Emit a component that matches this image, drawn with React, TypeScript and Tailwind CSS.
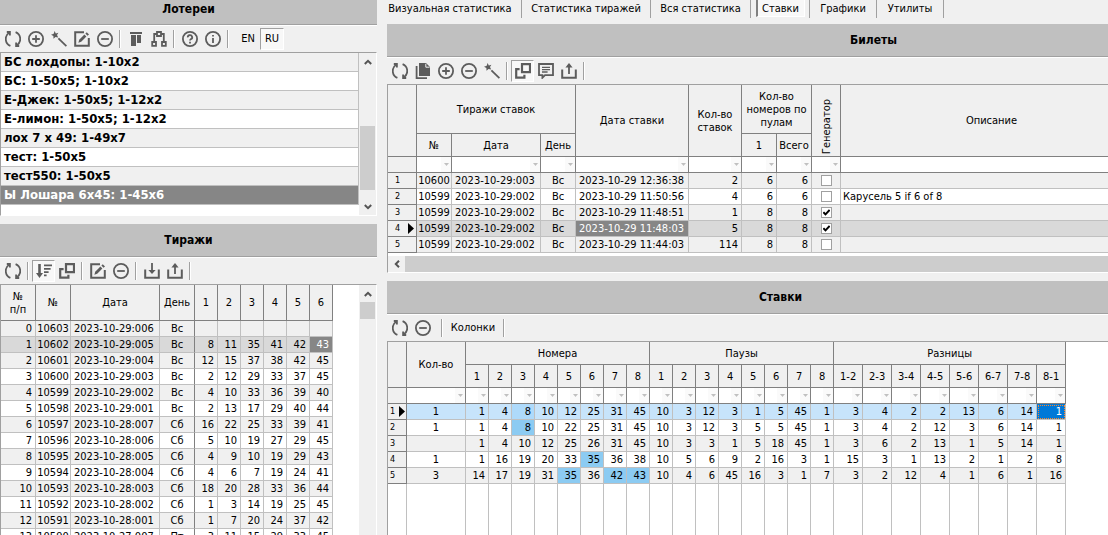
import type { ReactNode } from 'react';
import clsx from 'clsx';

type IconName =
  | 'refresh' | 'plus' | 'minus' | 'wand' | 'edit' | 'bars' | 'tree' | 'help' | 'info'
  | 'sort' | 'windows' | 'import' | 'export' | 'copy' | 'comment';

const icons: Record<IconName, ReactNode> = {
  refresh: (
    <>
      <path d="M5.4 14.9A7.4 7.4 0 0 1 4.2 1.8" />
      <path d="M1.8 1H4.9V4.6" />
      <path d="M10.6 1.1A7.4 7.4 0 0 1 11.8 14.2" />
      <path d="M14.2 15H11.1V11.4" />
    </>
  ),
  plus: (
    <>
      <circle cx="8" cy="8" r="7.1" />
      <path d="M8 4.2V11.8M4.2 8H11.8" />
    </>
  ),
  minus: (
    <>
      <circle cx="8" cy="8" r="7.1" />
      <path d="M4.2 8H11.8" />
    </>
  ),
  wand: (
    <>
      <path d="M3.6 0L4.8 2.4L7.4 1.8L6 4.1L7.2 6.6L4.5 5.9L2.5 7.7L2.4 5L0 3.7L2.7 2.7Z" fill="currentColor" stroke="none" />
      <path d="M7.4 7.4L15.4 15.2" />
    </>
  ),
  edit: (
    <>
      <path d="M10 1.2H1.2V14.8H14.8V7" strokeWidth="2" />
      <path d="M4.4 11.7L5.2 8.8L10.4 3.6L12.4 5.6L7.2 10.8Z" fill="currentColor" stroke="none" />
      <path d="M11.4 2.6L12.8 1.2L15 3.4L13.5 4.8Z" fill="currentColor" stroke="none" />
    </>
  ),
  bars: (
    <g fill="currentColor" stroke="none">
      <path d="M2 1H14V3H2Z" />
      <path d="M3 4H8V15H3Z" />
      <path d="M9 4H13V12H9Z" />
    </g>
  ),
  tree: (
    <>
      <path d="M6 1H10V5H6Z" />
      <path d="M1.2 11H5V14.8H1.2Z" />
      <path d="M11 11H14.8V14.8H11Z" />
      <path d="M6 3H3.2V11M10 3H12.8V11" />
    </>
  ),
  help: (
    <>
      <circle cx="8" cy="8" r="7.1" />
      <path d="M5.8 6.4A2.2 2.1 0 1 1 8.8 8.2Q8 8.6 8 9.6" />
      <path d="M8 10.8V12.4" />
    </>
  ),
  info: (
    <>
      <circle cx="8" cy="8" r="7.1" />
      <path d="M8 7V12M8 4V5.6" />
    </>
  ),
  sort: (
    <>
      <path d="M3.5 1V11" strokeWidth="2.6" />
      <path d="M0 10H7L3.5 15Z" fill="currentColor" stroke="none" />
      <path d="M8 2.4H16M8 5.8H14.6M8 9.2H12.6M8 12.4H10.6" />
    </>
  ),
  windows: (
    <>
      <path d="M7 1.2H15V9.2H7Z" strokeWidth="2.2" />
      <path d="M4.6 6.2H1.2V14.6H9.4V11.8" strokeWidth="2.2" />
    </>
  ),
  import: (
    <>
      <path d="M1.2 6.6V14.8H14.8V6.6" strokeWidth="2" />
      <path d="M8 0V8" />
      <path d="M4.4 7H11.6L8 11Z" fill="currentColor" stroke="none" />
    </>
  ),
  export: (
    <>
      <path d="M1.2 6.6V14.8H14.8V6.6" strokeWidth="2" />
      <path d="M8 3V11" />
      <path d="M4.4 4.4H11.6L8 0Z" fill="currentColor" stroke="none" />
    </>
  ),
  copy: (
    <>
      <path d="M4 0H11L15 4V13H4Z" fill="currentColor" stroke="none" />
      <path d="M1.6 3V15.2H12" />
      <path d="M10.8 0.8V4.2H14.6" stroke="#f0f0f0" strokeWidth="1" />
    </>
  ),
  comment: (
    <>
      <path d="M1 1H15V12.2H7L4.4 14.8V12.2H1Z" />
      <path d="M4 4.4H12M4 6.7H12M4 9H9.6" strokeWidth="1.3" />
    </>
  ),
};

function Icon({ name }: { name: IconName }) {
  return (
    <svg className="h-4 w-4" viewBox="0 0 16 16" fill="none" stroke="currentColor" strokeWidth="1.8">
      {icons[name]}
    </svg>
  );
}

function ToolButton({ icon, label, pressed }: { icon?: IconName; label?: string; pressed?: boolean }) {
  return (
    <button
      type="button"
      aria-label={label ?? icon}
      aria-pressed={pressed}
      className={clsx(
        'flex h-[22px] shrink-0 items-center justify-center border',
        label ? 'min-w-6 text-[11px] text-black' : 'w-[23px] text-[#5c5c5c]',
        pressed ? 'border-t-[#a0a0a0] border-r-white border-b-white border-l-[#a0a0a0] bg-[#f8f8f8]' : 'border-transparent',
      )}
    >
      {icon ? <Icon name={icon} /> : label}
    </button>
  );
}

function Separator() {
  return <span className="mx-[3px] h-[18px] w-0.5 shrink-0 border-r border-l border-r-white border-l-[#a0a0a0]" />;
}

function Toolbar({ children }: { children: ReactNode }) {
  return <div className="flex h-[26px] shrink-0 items-center pl-px">{children}</div>;
}

function Title({ children, className }: { children: ReactNode; className?: string }) {
  return (
    <h2
      className={clsx(
        'flex shrink-0 items-center justify-center border-b border-[#a0a0a0] bg-[#c0c0c0] text-[12px] font-bold shadow-[0_1px_0_white]',
        className,
      )}
    >
      {children}
    </h2>
  );
}

function Chevron({ className }: { className?: string }) {
  return (
    <svg className={clsx('h-2 w-2', className)} viewBox="0 0 8 8" fill="none" stroke="#555" strokeWidth="2">
      <path d="M0.8 6L4 2.8L7.2 6" />
    </svg>
  );
}

function ScrollArrow({ label, className }: { label: string; className?: string }) {
  return (
    <button type="button" aria-label={label} className="flex h-[17px] w-full shrink-0 items-center justify-center">
      <Chevron className={className} />
    </button>
  );
}

function FilterCell({ caret = true }: { caret?: boolean }) {
  return (
    <td className="h-4 border-r border-b border-[#808080] bg-white p-0">
      {caret && (
        <button type="button" aria-label="Фильтр" className="ml-auto flex h-[15px] w-[10px] items-center justify-center bg-[#fafafa]">
          <svg className="h-[3px] w-[5px]" viewBox="0 0 5 3" fill="#c0c0c0">
            <path d="M0 0H5L2.5 3Z" />
          </svg>
        </button>
      )}
    </td>
  );
}

function RowNumber({ n, current, narrow }: { n: number; current?: boolean; narrow?: boolean }) {
  return (
    <th scope="row" className="h-4 border-r border-b border-[#808080] bg-[#f0f0f0] p-0 font-normal">
      <div className={clsx('flex items-center justify-between text-[9px] leading-[15px]', narrow ? 'pr-px pl-0.5' : 'pr-0.5 pl-[7px]')}>
        {n}
        {current && (
          <svg className="h-[11px] w-[6px]" viewBox="0 0 6 11" fill="black">
            <path d="M0 0L6 5.5L0 11Z" />
          </svg>
        )}
      </div>
    </th>
  );
}

const head = 'border-r border-b border-[#808080] bg-[#f0f0f0] p-0 text-center font-normal leading-[13px]';
const cell = 'h-4 border-r border-b border-[#c0c0c0] p-0 leading-[15px] whitespace-nowrap';
const tableBase = 'table-fixed border-separate border-spacing-0 text-[11px]';

const lotteries = [
  'БС лохдопы: 1-10x2',
  'БС: 1-50x5; 1-10x2',
  'Е-Джек: 1-50x5; 1-12x2',
  'Е-лимон: 1-50x5; 1-12x2',
  'лох 7 x 49: 1-49x7',
  'тест: 1-50x5',
  'тест550: 1-50x5',
  'Ы Лошара 6x45: 1-45x6',
];

function Lotteries() {
  return (
    <section className="flex flex-col">
      <Title className="h-[25px] pb-1.5">Лотереи</Title>
      <div className="pt-px">
        <Toolbar>
          <ToolButton icon="refresh" />
          <ToolButton icon="plus" />
          <ToolButton icon="wand" />
          <ToolButton icon="edit" />
          <ToolButton icon="minus" />
          <Separator />
          <ToolButton icon="bars" />
          <ToolButton icon="tree" />
          <Separator />
          <ToolButton icon="help" />
          <ToolButton icon="info" />
          <Separator />
          <span className="w-1" />
          <ToolButton label="EN" />
          <ToolButton label="RU" pressed />
        </Toolbar>
      </div>
      <div className="flex border-t border-r border-b border-l border-[#a0a0a0] border-r-white border-b-white">
        <ul className="grow bg-white pb-[10px] text-[13px] font-bold">
          {lotteries.map((name, i) => (
            <li key={name}>
              <button
                type="button"
                className={clsx(
                  'block h-[19px] w-full border-r border-b border-[#c0c0c0] pl-[3px] text-left leading-[18px]',
                  i === lotteries.length - 1 ? 'bg-[#868686] text-white' : i % 2 ? 'bg-white' : 'bg-[#f0f0f0]',
                )}
              >
                {name}
              </button>
            </li>
          ))}
        </ul>
        <div className="ml-px flex w-4 flex-col">
          <ScrollArrow label="Вверх" />
          <div className="mt-14 mr-px h-16 bg-[#cdcdcd]" />
          <div className="grow" />
          <ScrollArrow label="Вниз" className="rotate-180" />
        </div>
      </div>
    </section>
  );
}

const draws: [number, string, string, number[]][] = [
  [10603, '2023-10-29:006', 'Вс', []],
  [10602, '2023-10-29:005', 'Вс', [8, 11, 35, 41, 42, 43]],
  [10601, '2023-10-29:004', 'Вс', [12, 15, 37, 38, 42, 45]],
  [10600, '2023-10-29:003', 'Вс', [2, 12, 29, 33, 37, 45]],
  [10599, '2023-10-29:002', 'Вс', [4, 10, 33, 36, 39, 40]],
  [10598, '2023-10-29:001', 'Вс', [2, 13, 17, 29, 40, 44]],
  [10597, '2023-10-28:007', 'Сб', [16, 22, 25, 33, 39, 41]],
  [10596, '2023-10-28:006', 'Сб', [5, 10, 19, 27, 29, 45]],
  [10595, '2023-10-28:005', 'Сб', [4, 9, 10, 19, 29, 43]],
  [10594, '2023-10-28:004', 'Сб', [4, 6, 7, 19, 24, 41]],
  [10593, '2023-10-28:003', 'Сб', [18, 20, 28, 33, 36, 44]],
  [10592, '2023-10-28:002', 'Сб', [1, 3, 14, 19, 25, 45]],
  [10591, '2023-10-28:001', 'Сб', [1, 7, 20, 24, 37, 42]],
  [10590, '2023-10-27:007', 'Пт', [3, 11, 15, 29, 33, 45]],
];

function Draws() {
  return (
    <section className="mt-2 flex min-h-0 grow flex-col">
      <Title className="h-[33px]">Тиражи</Title>
      <div className="pt-px">
        <Toolbar>
          <ToolButton icon="refresh" />
          <Separator />
          <ToolButton icon="sort" pressed />
          <ToolButton icon="windows" />
          <Separator />
          <ToolButton icon="edit" />
          <ToolButton icon="minus" />
          <Separator />
          <ToolButton icon="import" />
          <ToolButton icon="export" />
          <Separator />
        </Toolbar>
      </div>
      <div className="flex min-h-0 grow overflow-hidden border-t border-r border-l border-[#a0a0a0] border-r-white">
        <div className="grow bg-white">
          <table className={clsx(tableBase, 'w-[332px]')}>
            <colgroup>
              <col className="w-[35px]" />
              <col className="w-[35px]" />
              <col className="w-[89px]" />
              <col className="w-[35px]" />
              {[1, 2, 3, 4, 5, 6].map((n) => (
                <col key={n} className="w-[23px]" />
              ))}
            </colgroup>
            <thead>
              <tr className="h-9">
                <th className={head}>№<br />п/п</th>
                {['№', 'Дата', 'День', 1, 2, 3, 4, 5, 6].map((h) => (
                  <th key={h} className={head}>{h}</th>
                ))}
              </tr>
            </thead>
            <tbody>
              {draws.map(([id, date, day, numbers], i) => (
                <tr key={id} className={i === 1 ? 'bg-[#d9d9d9]' : i % 2 ? 'bg-white' : 'bg-[#f0f0f0]'}>
                  <td className={clsx(cell, 'pr-[3px] text-right')}>{i}</td>
                  <td className={clsx(cell, 'text-center')}>{id}</td>
                  <td className={clsx(cell, 'pl-[3px]')}>{date}</td>
                  <td className={clsx(cell, 'border-r-[#808080] text-center')}>{day}</td>
                  {[0, 1, 2, 3, 4, 5].map((c) => (
                    <td key={c} className={clsx(cell, 'pr-[3px] text-right', i === 1 && c === 5 && 'bg-[#868686] text-white')}>
                      {numbers[c]}
                    </td>
                  ))}
                </tr>
              ))}
            </tbody>
          </table>
        </div>
        <div className="ml-px flex w-4 flex-col">
          <ScrollArrow label="Вверх" />
          <div className="mr-px h-[17px] bg-[#cdcdcd]" />
        </div>
      </div>
    </section>
  );
}

const tabs = [
  { name: 'Визуальная статистика', width: 'w-[135px] pr-2' },
  { name: 'Статистика тиражей', width: 'w-[129px]' },
  { name: 'Вся статистика', width: 'w-[100px]' },
  { name: 'Ставки', width: 'w-[59px]' },
  { name: 'Графики', width: 'w-[67px]' },
  { name: 'Утилиты', width: 'w-[67px]' },
];

function Tabs() {
  return (
    <nav className="flex h-[18px] shrink-0">
      {tabs.map(({ name, width }) => (
        <div key={name} className={clsx('flex justify-center border-r border-[#a0a0a0]', width)}>
          <button
            type="button"
            className={clsx(
              'h-[17px] whitespace-nowrap text-[11px] leading-[15px]',
              name === 'Ставки' && 'w-[49px] border-r border-b border-l-2 border-r-white border-b-white border-l-[#808080] bg-[#f8f8f8]',
            )}
          >
            {name}
          </button>
        </div>
      ))}
    </nav>
  );
}

function Check({ checked }: { checked: boolean }) {
  return (
    <span className="relative mx-auto block h-[11px] w-[11px]">
      <input
        type="checkbox"
        aria-label="Генератор"
        defaultChecked={checked}
        className="peer block h-[11px] w-[11px] appearance-none border border-[#a0a0a0] bg-white"
      />
      <svg
        className="pointer-events-none invisible absolute top-0.5 left-0.5 h-[7px] w-[7px] peer-checked:visible"
        viewBox="0 0 7 7"
        fill="none"
        stroke="black"
        strokeWidth="1.9"
      >
        <path d="M0.4 3.2L2.5 5.4L6.6 1" />
      </svg>
    </span>
  );
}

const tickets = [
  { id: 10600, draw: '2023-10-29:003', day: 'Вс', date: '2023-10-29 12:36:38', bets: 2, pool: 6, generated: false, note: '' },
  { id: 10599, draw: '2023-10-29:002', day: 'Вс', date: '2023-10-29 11:50:56', bets: 4, pool: 6, generated: false, note: 'Карусель 5 if 6 of 8' },
  { id: 10599, draw: '2023-10-29:002', day: 'Вс', date: '2023-10-29 11:48:51', bets: 1, pool: 8, generated: true, note: '' },
  { id: 10599, draw: '2023-10-29:002', day: 'Вс', date: '2023-10-29 11:48:03', bets: 5, pool: 8, generated: true, note: '' },
  { id: 10599, draw: '2023-10-29:002', day: 'Вс', date: '2023-10-29 11:44:03', bets: 114, pool: 8, generated: false, note: '' },
];

function Tickets() {
  return (
    <section className="mt-1.5 flex flex-col">
      <Title className="h-[33px] pl-[252px]">Билеты</Title>
      <div className="pt-px">
        <Toolbar>
          <ToolButton icon="refresh" />
          <ToolButton icon="copy" />
          <ToolButton icon="plus" />
          <ToolButton icon="minus" />
          <ToolButton icon="wand" />
          <Separator />
          <ToolButton icon="windows" pressed />
          <ToolButton icon="comment" />
          <ToolButton icon="export" />
          <Separator />
        </Toolbar>
      </div>
      <div className="border-t border-b border-l border-[#a0a0a0] border-b-white bg-white">
        <table className={clsx(tableBase, 'w-full [&_tr>:last-child]:border-r-0')}>
          <colgroup>
            <col className="w-[29px]" />
            <col className="w-[35px]" />
            <col className="w-[89px]" />
            <col className="w-[35px]" />
            <col className="w-[113px]" />
            <col className="w-[53px]" />
            <col className="w-[35px]" />
            <col className="w-[35px]" />
            <col className="w-[29px]" />
            <col />
          </colgroup>
          <thead>
            <tr className="h-[49px]">
              <th rowSpan={2} className={head} />
              <th colSpan={3} className={head}>Тиражи ставок</th>
              <th rowSpan={2} className={head}>Дата ставки</th>
              <th rowSpan={2} className={head}>Кол-во<br />ставок</th>
              <th colSpan={2} className={head}>Кол-во<br />номеров по<br />пулам</th>
              <th rowSpan={2} className={clsx(head, 'align-bottom')}>
                <div className="flex justify-center">
                  <span className="rotate-180 pt-0.5 [writing-mode:vertical-rl]">Генератор</span>
                </div>
              </th>
              <th rowSpan={2} className={clsx(head, 'pl-[34px]')}>Описание</th>
            </tr>
            <tr className="h-[23px] [&>:last-child]:border-r!">
              {['№', 'Дата', 'День', '1', 'Всего'].map((h) => (
                <th key={h} className={head}>{h}</th>
              ))}
            </tr>
          </thead>
          <tbody>
            <tr>
              <td className={head} />
              {[1, 2, 3, 4, 5, 6, 7, 8].map((n) => (
                <FilterCell key={n} />
              ))}
              <FilterCell caret={false} />
            </tr>
            {tickets.map((t, i) => (
              <tr key={t.date} className={i === 3 ? 'bg-[#d9d9d9]' : i % 2 ? 'bg-white' : 'bg-[#f0f0f0]'}>
                <RowNumber n={i + 1} current={i === 3} />
                <td className={clsx(cell, 'text-center')}>{t.id}</td>
                <td className={clsx(cell, 'pl-[3px]')}>{t.draw}</td>
                <td className={clsx(cell, 'text-center')}>{t.day}</td>
                <td className={clsx(cell, 'pl-[3px]', i === 3 && 'bg-[#868686] text-white')}>{t.date}</td>
                <td className={clsx(cell, 'pr-[3px] text-right')}>{t.bets}</td>
                <td className={clsx(cell, 'pr-[3px] text-right')}>{t.pool}</td>
                <td className={clsx(cell, 'pr-[3px] text-right')}>{t.pool}</td>
                <td className={cell}><Check checked={t.generated} /></td>
                <td className={clsx(cell, 'pl-0.5')}>{t.note}</td>
              </tr>
            ))}
          </tbody>
        </table>
        <div className="mt-[3px] flex h-4 bg-[#cdcdcd]">
          <button type="button" aria-label="Влево" className="flex w-[17px] items-center justify-center bg-[#f0f0f0]">
            <Chevron className="-rotate-90" />
          </button>
        </div>
      </div>
    </section>
  );
}

const bets: { count?: number; values: number[]; hits: number[] }[] = [
  { count: 1, hits: [2], values: [1, 4, 8, 10, 12, 25, 31, 45, 10, 3, 12, 3, 1, 5, 45, 1, 3, 4, 2, 2, 13, 6, 14, 1] },
  { count: 1, hits: [2], values: [1, 4, 8, 10, 22, 25, 31, 45, 10, 3, 12, 3, 5, 5, 45, 1, 3, 4, 2, 12, 3, 6, 14, 1] },
  { hits: [], values: [1, 4, 10, 12, 25, 26, 31, 45, 10, 3, 3, 1, 5, 18, 45, 1, 3, 6, 2, 13, 1, 5, 14, 1] },
  { count: 1, hits: [5], values: [1, 16, 19, 20, 33, 35, 36, 38, 10, 5, 6, 9, 2, 16, 3, 1, 15, 3, 1, 13, 2, 1, 2, 8] },
  { count: 3, hits: [4, 6, 7], values: [14, 17, 19, 31, 35, 36, 42, 43, 10, 4, 6, 45, 16, 3, 1, 7, 3, 2, 12, 4, 1, 6, 1, 16] },
];

const positions = [1, 2, 3, 4, 5, 6, 7, 8];
const columns = [...positions, ...positions, '1-2', '2-3', '3-4', '4-5', '5-6', '6-7', '7-8', '8-1'];

function Bets() {
  return (
    <section className="mt-2 flex min-h-0 grow flex-col">
      <Title className="h-[33px] pl-[66px]">Ставки</Title>
      <div className="pt-px">
        <Toolbar>
          <ToolButton icon="refresh" />
          <ToolButton icon="minus" />
          <span className="w-1" />
          <Separator />
          <div className="flex w-[54px] justify-center">
            <ToolButton label="Колонки" />
          </div>
          <Separator />
        </Toolbar>
      </div>
      <div className="min-h-0 grow overflow-hidden border-t border-l border-[#a0a0a0] bg-white">
        <table className={clsx(tableBase, 'w-[678px]')}>
          <colgroup>
            <col className="w-[19px]" />
            <col className="w-[59px]" />
            {columns.map((_, i) => (
              <col key={i} className={i < 16 ? 'w-[23px]' : 'w-[29px]'} />
            ))}
          </colgroup>
          <thead>
            <tr className="h-[23px]">
              <th rowSpan={2} className={head} />
              <th rowSpan={2} className={head}>Кол-во</th>
              <th colSpan={8} className={head}>Номера</th>
              <th colSpan={8} className={head}>Паузы</th>
              <th colSpan={8} className={head}>Разницы</th>
            </tr>
            <tr className="h-[23px]">
              {columns.map((c, i) => (
                <th key={i} className={head}>{c}</th>
              ))}
            </tr>
          </thead>
          <tbody>
            <tr>
              <td className={head} />
              <FilterCell />
              {columns.map((_, i) => (
                <FilterCell key={i} />
              ))}
            </tr>
            {bets.map((bet, row) => (
              <tr key={row} className={row === 0 ? 'bg-[#c7e4fb]' : row % 2 ? 'bg-white' : 'bg-[#f0f0f0]'}>
                <RowNumber n={row + 1} current={row === 0} narrow />
                <td className={clsx(cell, 'text-center')}>{bet.count}</td>
                {bet.values.map((v, i) => (
                  <td
                    key={i}
                    className={clsx(
                      cell,
                      'pr-[3px] text-right',
                      bet.hits.includes(i) && (row === 0 ? 'bg-[#aedafb]' : 'bg-[#8ccbf2]'),
                      row === 0 && i === 23 && 'bg-[#0078d7] text-white outline-1 -outline-offset-2 outline-dotted outline-[#ff8728]',
                    )}
                  >
                    {v}
                  </td>
                ))}
              </tr>
            ))}
            {/* empty part of the grid, only the column lines go on */}
            <tr>
              <td className="h-96 border-r border-[#c0c0c0]" />
              <td className="border-r border-[#c0c0c0]" />
              {columns.map((_, i) => (
                <td key={i} className="border-r border-[#c0c0c0] p-0" />
              ))}
            </tr>
          </tbody>
        </table>
      </div>
    </section>
  );
}

export default function App() {
  return (
    <div className="flex h-screen gap-[10px] overflow-hidden bg-[#f0f0f0] font-['Tahoma','DejaVu_Sans_Condensed','DejaVu_Sans',sans-serif] text-black">
      <aside className="flex w-[377px] shrink-0 flex-col">
        <Lotteries />
        <Draws />
      </aside>
      <main className="flex min-w-0 grow flex-col">
        <Tabs />
        <Tickets />
        <Bets />
      </main>
    </div>
  );
}
